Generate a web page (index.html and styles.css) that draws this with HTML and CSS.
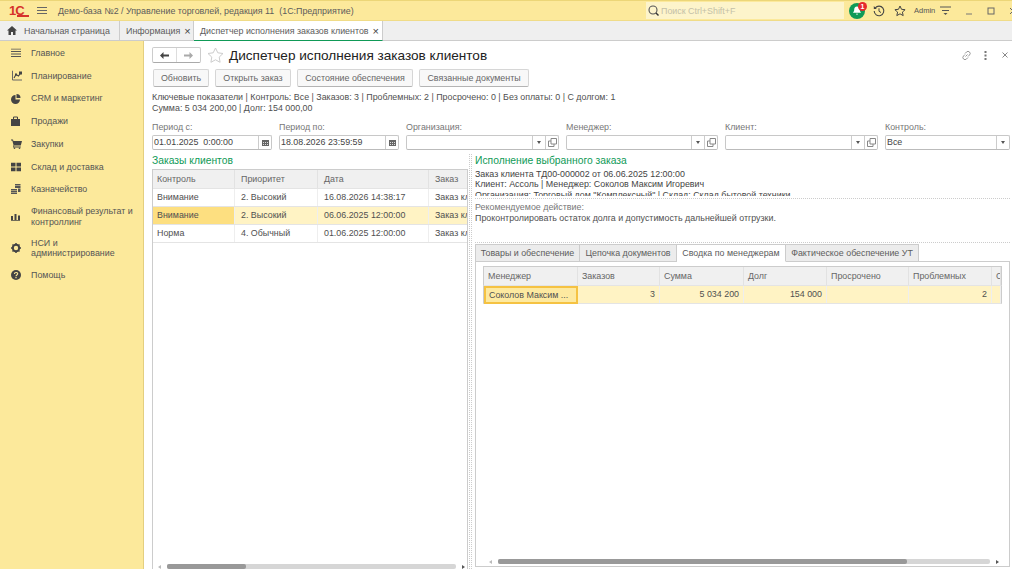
FILE: index.html
```html
<!DOCTYPE html>
<html lang="ru">
<head>
    <meta charset="UTF-8">
    <title>Диспетчер исполнения заказов клиентов</title>
    <link rel="stylesheet" href="styles.css">
</head>
<body>
<div class="app">

    <div class="topbar">
        <div class="logo">1С<span class="logo-line"></span></div>
        <svg class="burger" width="10" height="8" viewBox="0 0 10 8"><path d="M0 .5h10M0 3.500h10M0 6.500h10" stroke="#666" stroke-width="1"/></svg>
        <div class="app-title">Демо-база №2 / Управление торговлей, редакция 11  (1С:Предприятие)</div>
        <div class="search">
            <svg width="11" height="11" viewBox="0 0 11 11"><circle cx="5" cy="5" r="4" fill="none" stroke="#555" stroke-width="1.1"/><path d="M8 8l2.500 2.500" stroke="#333" stroke-width="1.4"/></svg>
            <span>Поиск Ctrl+Shift+F</span>
        </div>
        <div class="bell">
            <svg width="16" height="16" viewBox="0 0 16 16"><circle cx="8" cy="8" r="8" fill="#0f9a57"/><path d="M8 3.500c-2 0-2.800 1.600-2.800 3.300 0 1.500-.7 2.400-1.400 3h8.400c-.7-.6-1.400-1.500-1.400-3C10.800 5.100 10 3.500 8 3.500zM6.800 10.800h2.400L8 12z" fill="#fff"/></svg>
            <span class="badge">1</span>
        </div>
        <svg class="top-icon history" width="12" height="12" viewBox="0 0 12 12"><path d="M2.200 3A4.800 4.800 0 1 1 1.200 6" fill="none" stroke="#444" stroke-width="1.100"/><path d="M0.800 1v3h3z" fill="#444"/><path d="M6 3.300V6.300l2 1.200" fill="none" stroke="#444"/></svg>
        <svg class="top-icon fav" width="12" height="12" viewBox="0 0 12 12"><path d="M6 1l1.500 3.300 3.600.4-2.700 2.400.8 3.500L6 8.800l-3.200 1.800.8-3.500L.9 4.700l3.600-.4z" fill="none" stroke="#444"/></svg>
        <span class="admin">Admin</span>
        <svg class="top-icon settings" width="11" height="9" viewBox="0 0 11 9"><path d="M0 1h11M2 4.500h7" stroke="#555"/><path d="M3.500 7h4L5.500 9z" fill="#555"/></svg>
        <div class="window-btns">
            <svg width="8" height="8" viewBox="0 0 8 8"><path d="M1 7h6" stroke="#777"/></svg>
            <svg width="8" height="8" viewBox="0 0 8 8"><rect x="1" y="1" width="6" height="6" fill="none" stroke="#666"/></svg>
            <svg width="8" height="8" viewBox="0 0 8 8"><path d="M1 1l6 6M7 1l-6 6" stroke="#666"/></svg>
        </div>
    </div>

    <div class="tabs">
        <div class="tab tab-home">
            <svg width="10" height="9" viewBox="0 0 10 9"><path d="M5 0L0 4.500h1.500V9h2.500V6h2v3h2.500V4.500H10z" fill="#444"/></svg>
            Начальная страница
        </div>
        <div class="tab">Информация <span class="tab-x">×</span></div>
        <div class="tab tab-active">Диспетчер исполнения заказов клиентов <span class="tab-x">×</span></div>
    </div>

    <div class="workspace">
        <div class="sidebar">
            <div class="side-item">
                <svg width="10" height="9" viewBox="0 0 10 9"><path d="M0 .5h10M0 3h10M0 5.500h10M0 8h10" stroke="#555"/></svg>
                Главное
            </div>
            <div class="side-item">
                <svg width="11" height="11" viewBox="0 0 11 11"><path d="M1.500 0v9.500H11" fill="none" stroke="#666"/><path d="M3 7.500L5 4l2.500 1.500L10 2" fill="none" stroke="#444" stroke-width="1.100"/><rect x="8" y="1" width="3" height="3" fill="#444"/><rect x="4" y="3" width="2" height="2" fill="#444"/></svg>
                Планирование
            </div>
            <div class="side-item">
                <svg width="10" height="10" viewBox="0 0 10 10"><path d="M4.500 1a4.500 4.500 0 1 0 4.500 4.500H4.500z" fill="#444"/><path d="M5.500 0v4h4a4 4 0 0 0-4-4z" fill="#444"/></svg>
                CRM и маркетинг
            </div>
            <div class="side-item">
                <svg width="9" height="10" viewBox="0 0 9 10"><path d="M0 3h9v7H0z" fill="#444"/><path d="M2.500 3.500V1h4v2.500" fill="none" stroke="#444"/></svg>
                Продажи
            </div>
            <div class="side-item">
                <svg width="11" height="10" viewBox="0 0 11 10"><path d="M0 .5h2l.4 1.500H11l-1.200 4.500H3.200L2.800 7.500h7v1H2l.5-2.500L1.300 1.500H0z" fill="#444"/><circle cx="3.500" cy="9.200" r=".8" fill="#444"/><circle cx="8.500" cy="9.200" r=".8" fill="#444"/></svg>
                Закупки
            </div>
            <div class="side-item">
                <svg width="10" height="9" viewBox="0 0 10 9"><path d="M0 0h4.500v4H0zM5.500 0H10v4H5.500zM0 5h4.500v4H0zM5.500 5H10v4H5.500z" fill="#444"/></svg>
                Склад и доставка
            </div>
            <div class="side-item">
                <svg width="10" height="10" viewBox="0 0 10 10"><path d="M0 5h6v1.500H0zM0 7h6v1.500H0zM0 9h6v1H0zM4 0h5.500v1.500H4zM4 2h5.500v2H4zM7 4.500h2.500v3.500H7z" fill="#555"/></svg>
                Казначейство
            </div>
            <div class="side-item side-two">
                <svg width="9" height="8" viewBox="0 0 9 8"><path d="M0 3h2v4H0zM3.500 1h2v6h-2zM7 2.500h2V7H7zM0 7.300h9V8H0z" fill="#444"/></svg>
                <span>Финансовый результат и контроллинг</span>
            </div>
            <div class="side-item side-two">
                <svg width="10" height="10" viewBox="0 0 10 10"><circle cx="5" cy="5" r="3.200" fill="none" stroke="#444" stroke-width="2"/><path d="M5 0v1.500M5 8.500V10M0 5h1.500M8.500 5H10M1.500 1.500l1 1M7.500 7.500l1 1M8.500 1.500l-1 1M2.500 7.500l-1 1" stroke="#444" stroke-width="1.500"/></svg>
                <span>НСИ и администрирование</span>
            </div>
            <div class="side-item">
                <svg width="10" height="10" viewBox="0 0 10 10"><circle cx="5" cy="5" r="5" fill="#444"/><path d="M3.400 3.900C3.400 2 6.700 2 6.700 3.800 6.700 5 5 5 5 6.200" fill="none" stroke="#fce99b" stroke-width="1.100"/><path d="M4.400 7h1.200v1.200H4.400z" fill="#fce99b"/></svg>
                Помощь
            </div>
        </div>

        <div class="content">
            <div class="head-row">
                <div class="nav-btns">
                    <div class="nav-btn"><svg width="9" height="7" viewBox="0 0 9 7"><path d="M0 3.500L3.500 0v2.500H9v2H3.500V7z" fill="#444"/></svg></div>
                    <div class="nav-btn"><svg width="9" height="7" viewBox="0 0 9 7"><path d="M9 3.500L5.500 0v2.500H0v2h5.500V7z" fill="#aaa"/></svg></div>
                </div>
                <svg class="big-star" width="17" height="16" viewBox="0 0 17 16"><path d="M8.500 1l2.300 4.800 5.200.7-3.800 3.600.9 5.200-4.600-2.500-4.600 2.500.9-5.200L1 6.500l5.200-.7z" fill="none" stroke="#ccc"/></svg>
                <h1>Диспетчер исполнения заказов клиентов</h1>
                <div class="head-actions">
                    <svg width="11" height="11" viewBox="0 0 11 11"><path d="M4.500 6.500l2-2M4 3.500l1.500-1.500a2 2 0 0 1 3 3L7 6.500M7 7.500L5.500 9a2 2 0 0 1-3-3L4 4.500" fill="none" stroke="#999"/></svg>
                    <svg width="3" height="9" viewBox="0 0 3 9"><path d="M.5 0h2v2h-2zM.5 3.500h2v2h-2zM.5 7h2v2h-2z" fill="#777"/></svg>
                    <svg width="6" height="6" viewBox="0 0 6 6"><path d="M.5.500l5 5M5.500.500l-5 5" stroke="#888"/></svg>
                </div>
            </div>

            <div class="btn-row">
                <div class="btn btn-refresh">Обновить</div>
                <div class="btn btn-open">Открыть заказ</div>
                <div class="btn btn-state">Состояние обеспечения</div>
                <div class="btn btn-docs">Связанные документы</div>
            </div>

            <div class="summary">
                Ключевые показатели | Контроль: Все | Заказов: 3 | Проблемных: 2 | Просрочено: 0 | Без оплаты: 0 | С долгом: 1<br>
                Сумма: 5 034 200,00 | Долг: 154 000,00
            </div>

            <div class="filters">
                <div class="field">
                    <label>Период с:</label>
                    <div class="input"><span class="val">01.01.2025  0:00:00</span><span class="addon"><svg width="7" height="7" viewBox="0 0 7 7"><path d="M0 1h7v6H0z" fill="#666"/><path d="M1 3h1v1H1zM3 3h1v1H3zM5 3h1v1H5zM1 5h1v1H1zM3 5h1v1H3zM5 5h1v1H5z" fill="#ddd"/></svg></span></div>
                </div>
                <div class="field">
                    <label>Период по:</label>
                    <div class="input"><span class="val">18.08.2026 23:59:59</span><span class="addon"><svg width="7" height="7" viewBox="0 0 7 7"><path d="M0 1h7v6H0z" fill="#666"/><path d="M1 3h1v1H1zM3 3h1v1H3zM5 3h1v1H5zM1 5h1v1H1zM3 5h1v1H3zM5 5h1v1H5z" fill="#ddd"/></svg></span></div>
                </div>
                <div class="field">
                    <label>Организация:</label>
                    <div class="input"><span class="val"></span><span class="addon"><i class="caret"></i></span><span class="addon"><svg width="9" height="9" viewBox="0 0 9 9"><path d="M3 .5h5.500V6H3zM.5 3H3M.5 3v5.500H6V6" fill="none" stroke="#888"/></svg></span></div>
                </div>
                <div class="field">
                    <label>Менеджер:</label>
                    <div class="input"><span class="val"></span><span class="addon"><i class="caret"></i></span><span class="addon"><svg width="9" height="9" viewBox="0 0 9 9"><path d="M3 .5h5.500V6H3zM.5 3H3M.5 3v5.500H6V6" fill="none" stroke="#888"/></svg></span></div>
                </div>
                <div class="field">
                    <label>Клиент:</label>
                    <div class="input"><span class="val"></span><span class="addon"><i class="caret"></i></span><span class="addon"><svg width="9" height="9" viewBox="0 0 9 9"><path d="M3 .5h5.500V6H3zM.5 3H3M.5 3v5.500H6V6" fill="none" stroke="#888"/></svg></span></div>
                </div>
                <div class="field">
                    <label>Контроль:</label>
                    <div class="input"><span class="val">Все</span><span class="addon"><i class="caret"></i></span></div>
                </div>
            </div>

            <div class="split">
                <div class="left-panel">
                    <div class="panel-title">Заказы клиентов</div>
                    <div class="grid-box">
                        <div class="row row-head orders">
                            <div>Контроль</div><div>Приоритет</div><div>Дата</div><div>Заказ</div>
                        </div>
                        <div class="row orders">
                            <div>Внимание</div><div>2. Высокий</div><div>16.08.2026 14:38:17</div><div>Заказ кл</div>
                        </div>
                        <div class="row row-sel orders">
                            <div class="cell-cur">Внимание</div><div>2. Высокий</div><div>06.06.2025 12:00:00</div><div>Заказ кл</div>
                        </div>
                        <div class="row orders">
                            <div>Норма</div><div>4. Обычный</div><div>01.06.2025 12:00:00</div><div>Заказ кл</div>
                        </div>
                        <div class="hscroll hscroll-left">
                            <i class="arr arr-l"></i><div class="track"><div class="thumb thumb-left"></div></div><i class="arr arr-r"></i>
                        </div>
                    </div>
                </div>

                <div class="right-panel">
                    <div class="panel-title">Исполнение выбранного заказа</div>
                    <div class="order-info">
                        Заказ клиента ТД00-000002 от 06.06.2025 12:00:00<br>
                        Клиент: Ассоль | Менеджер: Соколов Максим Игоревич<br>
                        Организация: Торговый дом "Комплексный" | Склад: Склад бытовой техники
                    </div>
                    <div class="action">
                        <div class="action-label">Рекомендуемое действие:</div>
                        <div>Проконтролировать остаток долга и допустимость дальнейшей отгрузки.</div>
                    </div>
                    <div class="sub-tabs">
                        <div class="sub-tab st1">Товары и обеспечение</div>
                        <div class="sub-tab st2">Цепочка документов</div>
                        <div class="sub-tab st3 sub-active">Сводка по менеджерам</div>
                        <div class="sub-tab st4">Фактическое обеспечение УТ</div>
                    </div>
                    <div class="tab-body">
                        <div class="row row-head managers">
                            <div>Менеджер</div><div>Заказов</div><div>Сумма</div><div>Долг</div><div>Просрочено</div><div>Проблемных</div><div>С</div>
                        </div>
                        <div class="row row-sel managers">
                            <div class="cell-focus">Соколов Максим ...</div><div class="num">3</div><div class="num">5 034 200</div><div class="num">154 000</div><div></div><div class="num">2</div><div></div>
                        </div>
                        <div class="hscroll hscroll-right">
                            <i class="arr arr-l"></i><div class="track"><div class="thumb thumb-right"></div></div><i class="arr arr-r"></i>
                        </div>
                    </div>
                </div>
            </div>
        </div>
    </div>
</div>
</body>
</html>
```

FILE: styles.css
```css
* {
    box-sizing: border-box;
}
html, body {
    margin: 0;
    height: 100%;
    background: #fff;
}
body {
    font-family: "Liberation Sans", Arial, sans-serif;
    font-size: 8.9px;
    color: #505050;
}
.app {
    width: 1012px;
    height: 569px;
    display: flex;
    flex-direction: column;
    overflow: hidden;
}

/* top bar */
.topbar {
    height: 21px;
    flex: none;
    display: flex;
    align-items: center;
    background: #fce99b;
    border-top: 1px solid #ecd678;
    border-bottom: 1px solid #f0dc88;
}
.logo {
    position: relative;
    width: 20px;
    margin-left: 9px;
    color: #d6322b;
    font-weight: bold;
    font-size: 13px;
    line-height: 12px;
    letter-spacing: -1px;
}
.logo-line {
    position: absolute;
    left: 8px;
    right: 0;
    bottom: 0;
    height: 2px;
    background: #d6322b;
}
.burger {
    margin-left: 8px;
}
.app-title {
    margin-left: 11px;
    white-space: pre;
    color: #5c5c5c;
}
.search {
    width: 198px;
    height: 17px;
    margin-left: auto;
    display: flex;
    align-items: center;
    gap: 2px;
    padding-left: 2px;
    background: #fdf4cb;
    color: #c4c0a8;
}
.bell {
    position: relative;
    width: 16px;
    height: 16px;
    margin-left: 5px;
}
.bell svg {
    display: block;
}
.badge {
    position: absolute;
    top: -1px;
    right: -2px;
    width: 9px;
    height: 9px;
    border-radius: 50%;
    background: #e5282c;
    color: #fff;
    font-size: 7px;
    font-weight: bold;
    line-height: 9px;
    text-align: center;
}
.top-icon {
    flex: none;
}
.history {
    margin-left: 8px;
}
.fav {
    margin-left: 9px;
}
.admin {
    margin-left: 8px;
    width: 20px;
    font-size: 7.5px;
    color: #555;
    flex: none;
}
.settings {
    margin-left: 6px;
}
.window-btns {
    display: flex;
    gap: 14px;
    margin-left: 14px;
    width: 47px;
    overflow: hidden;
    flex: none;
}
.window-btns svg {
    flex: none;
}

/* open tabs */
.tabs {
    height: 20px;
    flex: none;
    display: flex;
    background: #efefef;
    border-bottom: 1px solid #ccc;
}
.tab {
    display: flex;
    align-items: center;
    gap: 4px;
    padding: 0 6px;
    border-right: 1px solid #ccc;
    white-space: nowrap;
    color: #5c5c5c;
}
.tab-home {
    width: 120px;
    padding-left: 7px;
    gap: 7px;
}
.tab:nth-child(2) {
    width: 74px;
}
.tab-active {
    width: 189px;
    background: #fff;
    padding: 0 2px 0 6px;
    border-bottom: 1px solid #0f9a57;
    margin-bottom: -1px;
}
.tab-x {
    font-size: 11px;
    line-height: 10px;
    color: #444;
}

/* section panel */
.workspace {
    flex: 1;
    min-height: 0;
    display: flex;
}
.sidebar {
    width: 144px;
    flex: none;
    padding-top: 1px;
    background: #fce99b;
    border-right: 1px solid #e4cf7f;
}
.side-item {
    display: flex;
    align-items: center;
    padding: 6.1px 4px 6.1px 31px;
    position: relative;
    line-height: 10.5px;
    color: #555;
}
.side-two {
    padding-top: 5.3px;
    padding-bottom: 5.3px;
}
.side-item svg {
    position: absolute;
    left: 11px;
    top: 50%;
    transform: translateY(-50%);
}

/* form */
.content {
    flex: 1;
    min-width: 0;
    display: flex;
    flex-direction: column;
    padding: 6px 2px 0 8px;
}
.head-row {
    height: 16px;
    display: flex;
    align-items: center;
    flex: none;
}
.nav-btns {
    display: flex;
    width: 49px;
    height: 16px;
    border: 1px solid #ccc;
    border-bottom-color: #aaa;
    border-radius: 2px;
}
.nav-btn {
    flex: 1;
    display: flex;
    align-items: center;
    justify-content: center;
}
.nav-btn + .nav-btn {
    border-left: 1px solid #ddd;
}
.big-star {
    margin-left: 6px;
}
h1 {
    margin: 0 0 0 5px;
    font-size: 13.6px;
    font-weight: normal;
    color: #222;
}
.head-actions {
    margin-left: auto;
    display: flex;
    align-items: center;
    gap: 12px;
    padding-right: 2px;
}
.head-actions svg:last-child {
    margin-left: 3px;
}
.btn-row {
    display: flex;
    gap: 6px;
    margin-top: 6px;
    padding-left: 1px;
    flex: none;
}
.btn {
    height: 18px;
    line-height: 16px;
    text-align: center;
    background: #f8f8f8;
    border: 1px solid #d6d6d6;
    border-bottom-color: #b4b4b4;
    border-radius: 2px;
    color: #666;
}
.btn-refresh { width: 56px; }
.btn-open { width: 76px; }
.btn-state { width: 116px; }
.btn-docs { width: 110px; }
.summary {
    margin-top: 5px;
    line-height: 10.5px;
    flex: none;
}
.filters {
    display: grid;
    grid-template-columns: 120px 120px 153px 152px 153px 125px;
    column-gap: 7px;
    margin-top: 9px;
    flex: none;
}
.field label {
    display: block;
    height: 13px;
    line-height: 10px;
    color: #777;
}
.input {
    height: 15px;
    display: flex;
    border: 1px solid #c8c8c8;
    border-bottom-color: #bbb;
    border-radius: 2px;
    background: #fff;
    color: #444;
}
.val {
    flex: 1;
    min-width: 0;
    padding-left: 1px;
    line-height: 13px;
    white-space: pre;
}
.addon {
    width: 13px;
    flex: none;
    display: flex;
    align-items: center;
    justify-content: center;
    border-left: 1px solid #ccc;
}
.caret {
    width: 0;
    height: 0;
    border: 2px solid transparent;
    border-top: 3px solid #555;
    border-bottom: 0;
}

/* lower part */
.split {
    flex: 1;
    min-height: 0;
    display: flex;
    margin-top: 4px;
}
.left-panel {
    width: 318px;
    flex: none;
    display: flex;
    flex-direction: column;
    border-right: 1px dotted #ccc;
    padding-right: 1px;
}
.right-panel {
    flex: 1;
    min-width: 0;
    display: flex;
    flex-direction: column;
    margin-left: 1px;
    padding-left: 3px;
    border-left: 1px dotted #ccc;
}
.panel-title {
    height: 15px;
    flex: none;
    font-size: 10.3px;
    line-height: 14px;
    color: #0f9a57;
}
.grid-box {
    flex: 1;
    min-height: 0;
    position: relative;
    border: 1px solid #ccc;
    border-bottom: 0;
    overflow: hidden;
}
.row {
    display: grid;
    height: 18px;
    line-height: 17px;
    border-bottom: 1px solid #e4e4e4;
}
.row > div {
    padding: 0 4px;
    overflow: hidden;
    white-space: nowrap;
    border-right: 1px solid #eee;
}
.row-head {
    height: 19px;
    line-height: 18px;
    background: #f0f0f0;
    color: #666;
}
.row-head > div {
    border-right-color: #e2e2e2;
}
.row-sel {
    background: #fff3c4;
}
.orders {
    grid-template-columns: 82px 83px 111px 39px;
}
.orders > div {
    padding-left: 6px;
}
.orders > div:first-child {
    padding-left: 4px;
}
.row-sel > .cell-cur {
    background: #fddf80;
}
.order-info {
    height: 27px;
    margin-bottom: 2px;
    flex: none;
    line-height: 10.4px;
    overflow: hidden;
    color: #444;
}
.action {
    height: 45px;
    flex: none;
    padding-top: 3px;
    border-top: 1px dotted #ccc;
    border-bottom: 1px dotted #ccc;
    line-height: 11px;
}
.action-label {
    color: #777;
}
.sub-tabs {
    display: flex;
    height: 18px;
    margin-top: 1px;
    flex: none;
    position: relative;
    z-index: 1;
}
.sub-tab {
    height: 18px;
    line-height: 17px;
    text-align: center;
    background: #ececec;
    border: 1px solid #ccc;
    border-left: 0;
    color: #5c5c5c;
}
.st1 { width: 105px; border-left: 1px solid #ccc; }
.st2 { width: 97px; }
.st3 { width: 109px; }
.st4 { width: 133px; }
.sub-active {
    background: #fff;
    border-bottom-color: #fff;
}
.tab-body {
    flex: 1;
    min-height: 0;
    position: relative;
    margin-top: -1px;
    margin-bottom: 2px;
    padding: 4px 7px 0 7px;
    border: 1px solid #ccc;
    overflow: hidden;
}
.managers {
    grid-template-columns: 94px 82px 84px 83px 82px 83px 9px;
    border-left: 1px solid #ccc;
    border-right: 1px solid #ccc;
}
.managers.row-head {
    border-top: 1px solid #ccc;
    height: 20px;
}
.managers > div {
    padding: 0 4px;
}
.managers > .num {
    text-align: right;
}
.row-sel > .cell-focus {
    height: 18px;
    margin-bottom: -1px;
    border: 2px solid #f5c242;
    padding: 0 3px;
    line-height: 14px;
    background: #fde9a0;
}

/* scrollbars lie over the bottom of the grids */
.hscroll {
    position: absolute;
    display: flex;
    align-items: center;
    height: 5px;
}
.hscroll-left {
    left: 5px;
    right: 2px;
    bottom: 0;
}
.hscroll-right {
    left: 13px;
    right: 10px;
    bottom: 2px;
}
.track {
    flex: 1;
    height: 5px;
    margin: 0 6px;
    border-radius: 2px;
    background: #d6d6d6;
}
.thumb {
    height: 5px;
    border-radius: 2px;
    background: #999;
}
.thumb-left {
    width: 27.2%;
}
.thumb-right {
    width: 83.1%;
}
.arr {
    width: 0;
    height: 0;
    border: 2px solid transparent;
}
.arr-l {
    border-left: 0;
    border-right: 3px solid #bbb;
}
.arr-r {
    border-right: 0;
    border-left: 3px solid #555;
}
```
